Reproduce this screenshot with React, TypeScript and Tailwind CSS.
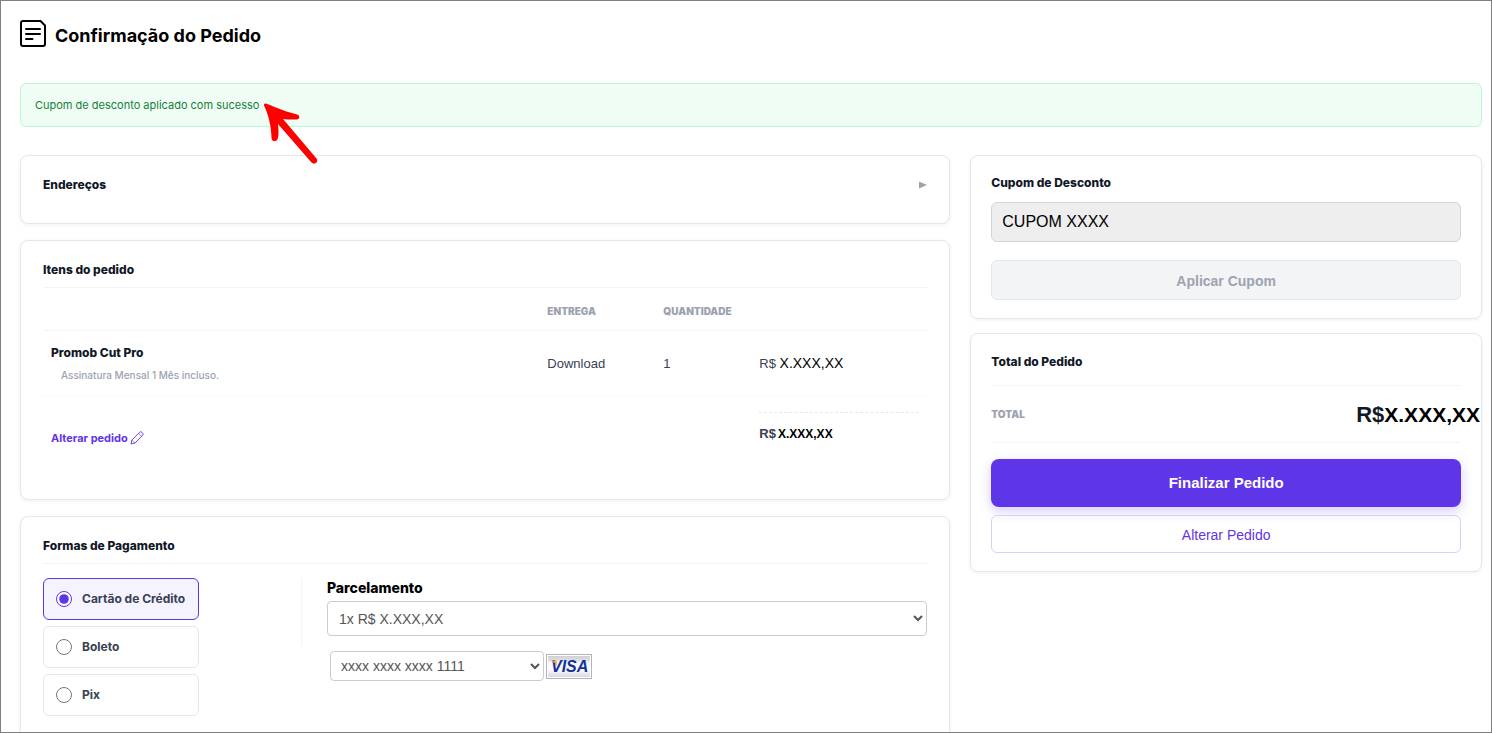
import { useState, type ReactNode } from 'react';

function DocumentIcon() {
  return (
    <svg width="26" height="27" viewBox="0 0 26 27" fill="none" stroke="#000" strokeWidth="2" aria-hidden="true">
      <path d="M3 1h17.500L25 5.500V24a2 2 0 0 1-2 2H3a2 2 0 0 1-2-2V3a2 2 0 0 1 2-2Z" strokeLinejoin="round" />
      <path d="M6 9h14M6 14h14M6 19h6.500" strokeLinecap="round" />
    </svg>
  );
}

function PencilIcon() {
  return (
    <svg width="14" height="14" viewBox="0 0 14 14" fill="none" stroke="currentColor" strokeWidth="0.9" strokeLinejoin="round" aria-hidden="true">
      <path d="M1 13l.8-3.900L9.600 1.300a1.600 1.600 0 0 1 2.300 0l.7.7a1.600 1.600 0 0 1 0 2.300L4.900 12.100z" />
      <path d="M8.600 2.300l3 3M1.900 9.200l2.900 2.900" strokeWidth="0.700" />
    </svg>
  );
}

function PointerArrow() {
  return (
    <svg className="pointer-events-none absolute left-[242px] top-[19px] z-10" width="56" height="62" viewBox="0 0 56 62" aria-hidden="true">
      <path
        d="M1 2.500C.7 1 2 .2 3.500.8C14 5 26 10 33.500 11.200C37.500 12 37 16.400 33.500 16.500C28.500 16.800 24 16.500 20 16L53.500 55.500C56 59 51.500 62.500 48.500 59.500L15 21C15.500 27 16 31 14.800 35.500C13.500 39.500 9 39 8.500 35C8 22 5.500 12 1 2.500Z"
        fill="#fe0000"
      />
    </svg>
  );
}

function VisaBadge() {
  return (
    <svg width="46" height="25" viewBox="0 0 46 25" role="img" aria-label="Visa">
      <defs>
        <linearGradient id="visa-bg" x1="0" y1="0" x2="0" y2="1">
          <stop offset="0" stopColor="#cfd1d3" />
          <stop offset="0.200" stopColor="#dcdee0" />
          <stop offset="0.300" stopColor="#f6f7f8" />
          <stop offset="0.650" stopColor="#fbfbfd" />
          <stop offset="1" stopColor="#d6d9e6" />
        </linearGradient>
      </defs>
      <rect x="0.500" y="0.500" width="45" height="24" fill="#fff" stroke="#b4b4b4" />
      <rect x="2" y="2" width="42" height="21" fill="url(#visa-bg)" />
      <text x="5" y="18" fill="#14309a" fontFamily="'Liberation Sans', Arial, sans-serif" fontSize="16" fontWeight="700" fontStyle="italic">VISA</text>
      <path d="M4.500 6.500h4.500c1 0 1.400.4 1.600 1.200l.8 4.500C9.500 9.200 7.500 7.700 4.500 6.500Z" fill="#e9a53a" />
    </svg>
  );
}

function Card({ className, children }: { className: string; children: ReactNode }) {
  return (
    <section className={`rounded-lg border border-[#e5e7eb] bg-white shadow-[0_1px_4px_rgba(0,0,0,0.06)] ${className}`}>
      {children}
    </section>
  );
}

const heading = 'font-[Inter,sans-serif] text-xs leading-[18px] font-extrabold text-[#111827]';
const label = 'font-[Inter,sans-serif] text-[10px] leading-4 font-black uppercase text-[#9ca3af]';
const methods = ['Cartão de Crédito', 'Boleto', 'Pix'];

export default function App() {
  const [method, setMethod] = useState(methods[0]);

  return (
    <main className="h-screen overflow-hidden border border-[#7f7f7f] bg-white pt-[19px] pr-[9px] pl-[19px] font-['Liberation_Sans',Arial,sans-serif] text-[13px] text-[#374151]">
      <header className="flex h-[27px] items-center gap-[9px]">
        <DocumentIcon />
        <h1 className="pt-1 font-[Inter,sans-serif] text-lg font-bold text-black">Confirmação do Pedido</h1>
      </header>

      <div role="status" className="relative mt-9 flex h-11 items-center rounded-md border border-[#bbf7d0] bg-[#f0fdf4] px-3.5 font-[Inter,sans-serif] text-[11px] text-[#15803d]">
        Cupom de desconto aplicado com sucesso
        <PointerArrow />
      </div>

      <div className="mt-7 grid grid-cols-[minmax(0,1fr)_35%] items-start gap-5">
        <div className="flex flex-col gap-4">
          <Card className="px-[22px] pt-5 pb-[29px]">
            <div className="flex items-center justify-between">
              <h2 className={heading}>Endereços</h2>
              <button type="button" aria-label="Expandir endereços" className="text-[#9ca3af]">
                <svg width="8" height="8" viewBox="0 0 8 8" fill="currentColor" aria-hidden="true">
                  <path d="M0 .5 8 4 0 7.500Z" />
                </svg>
              </button>
            </div>
          </Card>

          <Card className="px-[22px] pt-5 pb-[49px]">
            <h2 className={`${heading} border-b border-[#f3f4f6] pb-2`}>Itens do pedido</h2>
            <table className="w-full table-fixed border-separate border-spacing-0 text-left">
              <colgroup>
                <col />
                <col className="w-[116px]" />
                <col className="w-24" />
                <col className="w-44" />
              </colgroup>
              <thead>
                <tr>
                  <td className="h-[43px] border-b border-[#f3f4f6]" />
                  <th scope="col" className={`${label} border-b border-[#f3f4f6] px-2 pt-1`}>Entrega</th>
                  <th scope="col" className={`${label} border-b border-[#f3f4f6] px-2 pt-1`}>Quantidade</th>
                  <td className="border-b border-[#f3f4f6]" />
                </tr>
              </thead>
              <tbody>
                <tr>
                  <td className="border-b border-[#f9fafb] px-2 pt-[13px] pb-[13px]">
                    <p className={heading}>Promob Cut Pro</p>
                    <p className="mt-[5px] pl-2.5 font-[Inter,sans-serif] text-[10px] leading-4 font-medium text-[#9ca3af]">Assinatura Mensal 1 Mês incluso.</p>
                  </td>
                  <td className="border-b border-[#f9fafb] px-2">Download</td>
                  <td className="border-b border-[#f9fafb] px-2">1</td>
                  <td className="border-b border-[#f9fafb] px-2">
                    R$ <span className="text-sm text-black">X.XXX,XX</span>
                  </td>
                </tr>
              </tbody>
              <tfoot>
                <tr>
                  <td colSpan={3} className="px-2 pt-[31px] align-top">
                    <a href="#pedido" className="inline-flex items-center gap-0.5 font-[Inter,sans-serif] text-[11px] leading-4 font-bold text-[#5f35e5]">
                      Alterar pedido <PencilIcon />
                    </a>
                  </td>
                  <td className="px-2 pt-[15px] align-top">
                    <div className="border-t border-dashed border-[#e5e7eb] pt-[13px] pb-2 leading-4 font-bold">
                      R$<span className="ml-0.5 text-xs text-black">X.XXX,XX</span>
                    </div>
                  </td>
                </tr>
              </tfoot>
            </table>
          </Card>

          <Card className="px-[22px] pt-5 pb-10">
            <h2 className={`${heading} border-b border-[#f3f4f6] pb-2`}>Formas de Pagamento</h2>
            <div className="mt-3.5 flex items-start">
              <div role="radiogroup" aria-label="Formas de Pagamento" className="flex w-39 flex-col gap-1.5">
                {methods.map((name) => (
                  <label
                    key={name}
                    className="flex h-[42px] items-center gap-2.5 rounded-md border border-[#e5e7eb] pl-3 font-[Inter,sans-serif] text-xs leading-[18px] font-bold whitespace-nowrap has-checked:border-[#5f35e5] has-checked:bg-[#f5f3ff]"
                  >
                    <input
                      type="radio"
                      name="pagamento"
                      className="size-4 accent-[#5f35e5]"
                      checked={method === name}
                      onChange={() => setMethod(name)}
                    />
                    {name}
                  </label>
                ))}
              </div>
              <div className="ml-[102px] h-[68px] w-px bg-[#f3f4f6]" />
              <div className="ml-[25px] min-w-0 flex-1">
                <label htmlFor="parcelas" className="block pt-0.5 pb-[5px] font-[Inter,sans-serif] text-sm leading-4 font-extrabold text-black">
                  Parcelamento
                </label>
                <select id="parcelas" className="block h-[35px] w-full rounded border border-[#ccc] bg-white px-[7px] text-sm text-[#555]">
                  <option>1x R$ X.XXX,XX</option>
                </select>
                <div className="mt-[15px] ml-[3px] flex items-center gap-0.5">
                  <select aria-label="Cartão salvo" className="h-[30px] w-[214px] rounded border border-[#ccc] bg-white px-1.5 text-sm text-[#555]">
                    <option>xxxx xxxx xxxx 1111</option>
                  </select>
                  <VisaBadge />
                </div>
              </div>
            </div>
          </Card>
        </div>

        <aside className="flex flex-col gap-3.5">
          <Card className="px-5 py-[18px]">
            <label htmlFor="cupom" className={`${heading} block`}>Cupom de Desconto</label>
            <input
              id="cupom"
              type="text"
              readOnly
              value="CUPOM XXXX"
              className="mt-2.5 block h-10 w-full rounded-md border border-[#d1d5db] bg-[#eee] px-2.5 text-base text-black"
            />
            <button type="button" disabled className="mt-[18px] block h-10 w-full rounded-md border border-[#e5e7eb] bg-[#f3f4f6] pt-px text-sm font-bold text-[#9ca3af]">
              Aplicar Cupom
            </button>
          </Card>

          <Card className="px-5 pt-[19px] pb-[18px]">
            <h2 className={heading}>Total do Pedido</h2>
            <div className="mt-3.5 flex h-[58px] items-center justify-between border-y border-[#f3f4f6]">
              <span className={label}>Total</span>
              <strong className="-mr-[19px] pt-0.5 text-[22px] leading-6 font-bold text-[#111827]">
                R$<span className="text-[21px] text-black">X.XXX,XX</span>
              </strong>
            </div>
            <button type="button" className="mt-4 block h-12 w-full rounded-lg bg-[#5f35e8] text-[15px] font-bold text-white shadow-[0_4px_12px_rgba(95,53,232,0.25)]">
              Finalizar Pedido
            </button>
            <button type="button" className="mt-2 block h-[38px] w-full rounded-md border border-[#d8d0fa] pt-px text-sm text-[#5f35e5]">
              Alterar Pedido
            </button>
          </Card>
        </aside>
      </div>
    </main>
  );
}
